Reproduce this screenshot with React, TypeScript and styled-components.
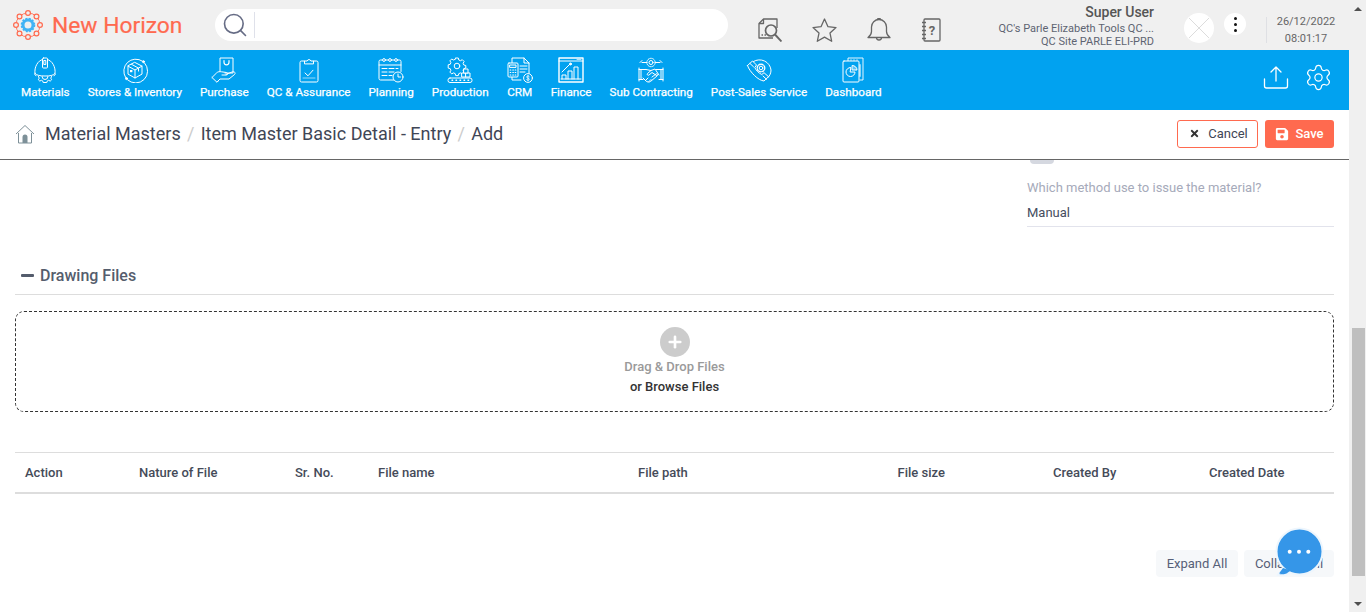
import React from "react";
import styled, { createGlobalStyle } from "styled-components";
import { Search as SearchIcon, Settings, Plus } from "lucide-react";
import { FaTimes, FaSave } from "react-icons/fa";

const Global = createGlobalStyle`
  html, body { margin: 0; padding: 0; height: 100%; overflow: hidden; background: #fff; }
  body { font-family: Roboto, "Liberation Sans", sans-serif; }
  * { box-sizing: border-box; }
`;

const Shell = styled.div`display: flex; height: 612px; width: 1366px; overflow: hidden;`;
const Main = styled.div`position: relative; width: 1349px; display: flex; flex-direction: column; background: #fff;`;

const Rail = styled.div`width: 17px; background: #f0f0f0; display: flex; flex-direction: column;`;
const RailArrow = styled.div<{ $down?: boolean }>`
  height: 17px; display: flex; align-items: center; justify-content: center;
  &::before {
    content: ""; width: 0; height: 0; border-left: 4px solid transparent; border-right: 4px solid transparent;
    ${(p) => (p.$down ? "border-top: 4px solid #505050;" : "border-bottom: 4px solid #505050;")}
  }
`;
const RailTrack = styled.div`flex: 1; padding: 311px 1px 0 3px;`;
const RailThumb = styled.div`height: 248px; background: #bfbfbf;`;

const Header = styled.header`height: 50px; background: #f0f0f0; display: flex; align-items: center; padding-left: 13px; flex: none;`;
const LogoMark = styled.svg`width: 30px; height: 30px; flex: none;`;
const Brand = styled.div`margin-left: 9px; padding-top: 1px; width: 130px; font-size: 22.8px; line-height: 28px; color: #ff6a4f; white-space: nowrap; -webkit-text-stroke: 0.2px #ff6a4f;`;
const SearchBox = styled.div`margin-left: 33px; width: 513px; height: 32px; background: #fff; border-radius: 16px; display: flex; align-items: center; padding-left: 6px; flex: none; color: #666c85;`;
const SearchRule = styled.span`width: 1px; height: 26px; background: #dfe1ea; margin-left: 5px;`;
const ToolIcons = styled.div`margin-left: 30px; padding-top: 10px; display: flex; gap: 30px; flex: none;`;
const ToolSvg = styled.svg`height: 24px; display: block; fill: none; stroke: #666; stroke-width: 1.3; stroke-linejoin: round;`;
const UserBlock = styled.div`width: 213px; text-align: right; flex: none; padding-top: 1px;`;
const UserName = styled.div`font-size: 14px; line-height: 18px; margin-bottom: 1px; font-weight: 500; color: #555; letter-spacing: -0.02px;`;
const UserLine = styled.div`font-size: 11px; line-height: 13px; color: #5e6472; white-space: nowrap;`;
const Avatar = styled.svg`margin: 6px 0 0 30px; width: 30px; height: 30px; flex: none;`;
const Kebab = styled.div`
  margin: 13px 0 0 10px; width: 22px; height: 22px; border-radius: 50%; background: #fff; flex: none; align-self: flex-start;
  display: flex; flex-direction: column; align-items: center; justify-content: center; gap: 3px;
`;
const KebabDot = styled.span`width: 3px; height: 3px; border-radius: 50%; background: #111;`;
const DateBlock = styled.div`
  margin: 10px 0 0 20px; width: 80px; padding-right: 1px; height: 26px; border-left: 1px solid #dfe0e4; display: flex; flex-direction: column; align-items: center; justify-content: center; flex: none; color: #666; font-size: 11px; line-height: 17px;
`;

const Nav = styled.nav`height: 60px; background: #01a2f0; display: flex; padding-left: 21px; gap: 18px; flex: none;`;
const NavItem = styled.a`
  display: flex; flex-direction: column; align-items: center; color: #fff; font-size: 11.7px; line-height: 14px; font-weight: 400; white-space: nowrap; padding-top: 7px; -webkit-text-stroke: 0.25px #fff;
`;
const NavLabel = styled.span`margin-top: 2px;`;
const NavSvg = styled.svg`width: 26px; height: 26px; display: block; fill: none; stroke: #fff; stroke-width: 1; stroke-linecap: round; stroke-linejoin: round;`;
const NavTools = styled.div`margin-left: auto; padding: 0 16px 6px 0; display: flex; align-items: center; gap: 15px;`;

const Crumbs = styled.div`height: 50px; border-bottom: 1px solid #666; display: flex; align-items: center; padding: 0 15px 2px; flex: none; background: #fff;`;
const HomeSvg = styled.svg`width: 20px; height: 20px; flex: none; margin-right: 10px;`;
const Crumb = styled.span`font-size: 18px; color: #3f4656;`;
const CrumbSep = styled.span`font-size: 18px; color: #ccc; margin: 0 6.3px;`;
const CrumbActions = styled.div`margin-left: auto; display: flex; gap: 7px;`;
const CancelBtn = styled.button`
  width: 81px; height: 28px; border: 1px solid #ff6a4f; border-radius: 3px; background: #fff; color: #3f4656; font: 400 13px Roboto, sans-serif;
  display: flex; align-items: center; justify-content: center; gap: 8px; padding: 0 0 0 2px;
`;
const SaveBtn = styled.button`
  width: 69px; height: 28px; border: 0; border-radius: 3px; background: #ff6a4f; color: #fff; font: 500 13px Roboto, sans-serif;
  display: flex; align-items: center; justify-content: center; gap: 6px; padding: 0;
`;

const Content = styled.main`flex: 1; padding: 0 15px; display: flex; flex-direction: column;`;
const MethodField = styled.section`margin-left: auto; width: 307px; height: 67px; border-bottom: 1px solid #e2e3ec;`;
const SwitchStub = styled.div`margin-left: 3px; width: 24px; height: 4px; background: #d5d8e0; border-radius: 0 0 10px 10px;`;
const FieldLabel = styled.div`margin-top: 16px; font-size: 13px; line-height: 16px; color: #a6aaba; white-space: nowrap;`;
const FieldValue = styled.div`margin-top: 9px; font-size: 13px; line-height: 16px; color: #454d5e;`;

const SectionHead = styled.div`margin-top: 34px; height: 34px; border-bottom: 1px solid #ddd; display: flex; align-items: center; padding: 0 0 4px 6px; gap: 6px;`;
const Minus = styled.span`width: 13px; height: 3px; background: #545c6c; border-radius: 1px;`;
const SectionTitle = styled.h2`margin: 0; font-size: 16px; font-weight: 500; color: #555d6d; line-height: 20px;`;

const Dropzone = styled.div`
  margin-top: 16px; height: 101px; border: 1px dashed #333; border-radius: 9px; display: flex; flex-direction: column; align-items: center; padding-top: 15px;
`;
const PlusDisc = styled.div`width: 30px; height: 30px; border-radius: 50%; background: #ccc; display: flex; align-items: center; justify-content: center; color: #fff; flex: none;`;
const DropTitle = styled.div`font-size: 13px; font-weight: 500; line-height: 20px; color: #9a9a9a;`;
const DropBrowse = styled.div`font-size: 13px; font-weight: 500; line-height: 20px; color: #333;`;

const TableHead = styled.div`
  margin-top: 40px; height: 42px; border-top: 1px solid #ddd; border-bottom: 2px solid #ddd;
  display: grid; grid-template-columns: 114px 156px 83px 260px 259.5px 155.5px 156px 1fr; align-items: center; padding-left: 10px;
`;
const HeadCell = styled.div`font-size: 13px; font-weight: 500; color: #454b59; white-space: nowrap;`;

const BottomActions = styled.div`margin-top: 56px; display: flex; justify-content: flex-end; gap: 6px;`;
const GhostBtn = styled.button<{ $w: number }>`
  width: ${(p) => p.$w}px; height: 27px; border: 0; border-radius: 4px; background: #f6f8fa; color: #566078; font: 400 13px Roboto, sans-serif; padding: 0;
`;
const ChatBubble = styled.svg`position: absolute; left: 1274px; top: 526px; width: 52px; height: 52px;`;

const Logo = () => {
  const dots = Array.from({ length: 8 }, (_, i) => {
    const a = (i * Math.PI) / 4;
    return [15 + 12 * Math.cos(a), 15 + 12 * Math.sin(a)];
  });
  return (
    <LogoMark viewBox="0 0 30 30">
      <circle cx="15" cy="15" r="12" fill="none" stroke="#ff7a60" strokeWidth="1" />
      {dots.map(([x, y], i) => (
        <circle key={i} cx={x} cy={y} r="2.4" fill="#f0f0f0" stroke="#ff6a4f" strokeWidth="1.2" />
      ))}
      <circle cx="15" cy="15" r="5" fill="none" stroke="#41b3f5" strokeWidth="3" />
      <circle cx="15" cy="15" r="6.5" fill="none" stroke="#41b3f5" strokeWidth="1.6" strokeDasharray="2 1.4" />
    </LogoMark>
  );
};

const icons: Record<string, React.ReactNode> = {
  materials: (
    <>
      <path d="M3 16.5C2 10 6 3.5 10.5 2.5M15.5 2.5C20 3.5 24 10 23 16.5" />
      <rect x="10.5" y="1" width="5" height="10" rx="1" />
      <rect x="12.2" y="3.5" width="1.6" height="4" />
      <path d="M3 16.5C5 18.5 8 19 13 19s8-.5 10-2.5c.8 1-.2 2.3-1 2.3" />
      <path d="M3 16.5c-.8 1 .2 2.3 1 2.3" />
      <path d="M6.5 19.5l.7 1.7-.9 1.5 1.5 1.4 1.6-.8 1.3.6.5 1.6h3.6l.5-1.6 1.3-.6 1.6.8 1.5-1.4-.9-1.5.7-1.7" />
      <path d="M10 19.5a3 3 0 0 0 6 0" />
    </>
  ),
  stores: (
    <>
      <path d="M20.5 4.2A12 12 0 0 0 3.6 20.5M5.5 22.8A12 12 0 0 0 22.6 6" />
      <circle cx="21.5" cy="4.7" r="1" fill="#fff" />
      <circle cx="4.5" cy="21.6" r="1" fill="#fff" />
      <path d="M13 5.5l7 3.6v8L13 21l-7-3.9v-8z" />
      <path d="M6 9.1l7 3.9 7-3.9M13 13v8M9.5 7.3l7 3.8v3" />
      <rect x="8" y="13" width="2.4" height="2.2" fill="#fff" stroke="none" />
    </>
  ),
  purchase: (
    <>
      <path d="M9 14V1h13v15h-8" />
      <path d="M13 3.5v1.8a2.5 2.5 0 0 0 5 0V3.5" strokeWidth="1.2" />
      <path d="M1 20.5l4.5-4.5c1.5-1.5 3-1.5 5-1.2l5 .7c1.5.3 1.5 2.5-.2 2.5H11" />
      <path d="M15 17.5l6-2.5c2.5-1 4 1 2.5 2.5L18 22H9l-2.5 2.5" />
      <path d="M1 20.5l5 4.8 1-1" />
    </>
  ),
  qc: (
    <>
      <path d="M8.5 4H5.5A1.5 1.5 0 0 0 4 5.5v18A1.5 1.5 0 0 0 5.5 25h15a1.5 1.5 0 0 0 1.5-1.5v-18A1.5 1.5 0 0 0 20.5 4h-3" />
      <path d="M8.5 6.5V4h2.6a2 2 0 0 1 3.8 0h2.6v2.5z" />
      <path d="M9 16l3 2.8 5-5.6" />
      <path d="M7 21h12" opacity=".6" />
    </>
  ),
  planning: (
    <>
      <path d="M16 23H2.5A1.5 1.5 0 0 1 1 21.5v-17A1.5 1.5 0 0 1 2.5 3h19A1.5 1.5 0 0 1 23 4.5v10" />
      <path d="M1 8h22" />
      <circle cx="6" cy="3" r="1.4" fill="#01a2f0" />
      <circle cx="12" cy="3" r="1.4" fill="#01a2f0" />
      <circle cx="18" cy="3" r="1.4" fill="#01a2f0" />
      <path d="M4 11.5h5M11 11.5h5M18 11.5h2M4 15h5M11 15h5M4 18.5h5M11 18.5h3" />
      <circle cx="20" cy="20" r="5" fill="#01a2f0" />
      <path d="M20 17v3h2.5" />
    </>
  ),
  production: (
    <>
      <circle cx="10" cy="9" r="2.8" />
      <path d="M8.7 1h2.6l.5 2 1.7.7 1.8-1 1.8 1.8-1 1.8.7 1.7 2 .5v2.600l-2 .5-.7 1.700 1 1.800-1.800 1.800-1.800-1-1.700.7-.5 2H8.700l-.5-2-1.700-.7-1.800 1-1.800-1.800 1-1.800-.7-1.700-2-.5V7.800l2-.5.7-1.700-1-1.800 1.800-1.800 1.800 1 1.700-.7z" />
      <rect x="1" y="21" width="24" height="4.500" rx="2" />
      <path d="M5 23.200h.6M9 23.200h.6M13 23.200h.6M17 23.200h.6M21 23.200h.6" strokeWidth="1.400" />
      <rect x="15" y="16" width="4" height="4" fill="#01a2f0" />
      <rect x="19" y="16" width="4" height="4" fill="#01a2f0" />
      <rect x="17" y="12" width="4" height="4" fill="#01a2f0" />
    </>
  ),
  crm: (
    <>
      <path d="M5 6V1h12l5 5v11M17 1v5h5M14 23H5v-3" />
      <rect x="1" y="6" width="10" height="14" rx="1" fill="#01a2f0" />
      <rect x="3" y="8" width="6" height="2.400" />
      <path d="M3.200 13h.6M5.800 13h.6M8.200 13h.6M3.200 15.500h.6M5.800 15.500h.6M8.200 15.500h.6M3.200 18h.6M5.800 18h.6M8.200 18h.6" strokeWidth="1.200" />
      <path d="M13 9h7M13 12h7M13 15h5" />
      <circle cx="21" cy="21" r="4.400" fill="#01a2f0" />
      <path d="M22.300 19.500c-.5-.8-2.700-.8-2.700.5s2.800 1 2.800 2.200-2.300 1.300-2.900.3M21 18.300v5.400" strokeWidth=".8" />
    </>
  ),
  finance: (
    <>
      <rect x="1" y="1" width="24" height="24" strokeWidth="1.400" />
      <path d="M1 4h24" />
      <path d="M19 2.500h4" opacity=".7" />
      <path d="M4 22v-4h4v4M10 22v-8h4v8M16 22V10h4v12M3 22h20" />
      <path d="M4 15l8-8" />
      <circle cx="12.500" cy="7" r="1" fill="#fff" />
    </>
  ),
  sub: (
    <>
      <circle cx="13" cy="5.500" r="2" />
      <circle cx="13" cy="5.500" r="4.200" strokeDasharray="1.800 1.200" />
      <path d="M9 5.500H4M17 5.500h5M4 3.500L2 5.500M22 3.500l2 2" />
      <path d="M1 11v13M3 12.500v10M1 12.500h7M1 22.500h4M25 11v13M23 12.500v10M25 12.500h-7M25 22.500h-4" />
      <path d="M5 21l3 3c1 1 3 1.500 4.500.5l7-6c1-1-.5-2.500-1.500-1.500L14 20" />
      <path d="M8 12.500l5 1 4-1.500 4 6M13 13.500l-3.500 3c-1 1 .5 2.500 1.500 1.500l3-2.500 4.500 3" />
      <path d="M8 23l2-2M11 24.500l2-2" />
    </>
  ),
  post: (
    <>
      <path d="M7.500 4.500A11.500 11.500 0 0 1 25 13c0 3-1 5.500-3 7.500" />
      <path d="M1.500 8.500l5-4.500 4 4-1.700 2.500c1.200 3 4 5.700 7 7l2.200-1.800 4.500 4-4.500 4.300c-3-.3-6.500-2.500-9.500-5.500S2.500 12 1.500 8.500z" />
      <path d="M4 6.500l3.500 3.300M17 19l3.500 3.300" />
      <circle cx="15" cy="11" r="1.800" />
      <circle cx="15" cy="11" r="3.800" strokeDasharray="1.800 1.200" strokeWidth="1.300" />
    </>
  ),
  dashboard: (
    <>
      <path d="M8 4V1h15v22h-3" opacity=".9" />
      <path d="M11 4V2.500M14 4V2.500M17 4V2.500" opacity=".6" />
      <path d="M20 8v11" strokeWidth="2" opacity=".55" />
      <rect x="3" y="4" width="16" height="21" rx="1" fill="#01a2f0" />
      <path d="M10.500 10.500a4.500 4.500 0 1 0 4.500 4.500h-4.500z" />
      <path d="M12.500 8.500a4.500 4.500 0 0 1 4.500 4.500h-4.500z" fill="#fff" fillOpacity=".35" />
    </>
  ),
};

const navItems = [
  ["materials", "Materials"],
  ["stores", "Stores & Inventory"],
  ["purchase", "Purchase"],
  ["qc", "QC & Assurance"],
  ["planning", "Planning"],
  ["production", "Production"],
  ["crm", "CRM"],
  ["finance", "Finance"],
  ["sub", "Sub Contracting"],
  ["post", "Post-Sales Service"],
  ["dashboard", "Dashboard"],
];

const columns = ["Action", "Nature of File", "Sr. No.", "File name", "File path", "File size", "Created By", "Created Date"];

export default function App() {
  return (
    <>
      <Global />
      <Shell>
        <Main>
          <Header>
            <Logo />
            <Brand>New Horizon</Brand>
            <SearchBox>
              <SearchIcon size={28} strokeWidth={1.4} />
              <SearchRule />
            </SearchBox>
            <ToolIcons>
              <ToolSvg viewBox="0 0 24 24" width="24">
                <path d="M15 20H1V5.500L5.500 1H19v9" />
                <path d="M5.500 1v4.500H1" />
                <circle cx="13" cy="12.500" r="5.500" strokeWidth="1.700" />
                <path d="M17 16.500L23.500 23.500" strokeWidth="1.900" />
                <path d="M3.500 17h1.500M6.500 17H8" strokeWidth="1.400" />
              </ToolSvg>
              <ToolSvg viewBox="0 0 25 24" width="25">
                <path d="M12.500 1l3.500 7.700 8 .9-6 5.500 1.700 8.200-7.200-4.200-7.200 4.200L7 15.100 1 9.600l8-.9z" />
              </ToolSvg>
              <ToolSvg viewBox="0 0 24 24" width="24">
                <path d="M1 19.500c2-1.500 3.500-3 3.500-6V9a7.500 7.500 0 0 1 15 0v4.500c0 3 1.500 4.500 3.500 6z" />
                <path d="M9.500 19.500a2.500 2.500 0 0 0 5 0" />
                <path d="M10.500 1.800a1.500 1.500 0 0 1 3 0" />
              </ToolSvg>
              <ToolSvg viewBox="0 0 20 24" width="20">
                <rect x="3" y="1" width="16" height="22" rx="1" />
                <path d="M1 4.500h4M1 8.500h4M1 12.500h4M1 16.500h4M1 20.500h4" />
                <text x="11" y="17" fontSize="13" fontWeight="700" fontFamily="Roboto" textAnchor="middle" fill="#666" stroke="none">?</text>
              </ToolSvg>
            </ToolIcons>
            <UserBlock>
              <UserName>Super User</UserName>
              <UserLine>QC's Parle Elizabeth Tools QC ...</UserLine>
              <UserLine>QC Site PARLE ELI-PRD</UserLine>
            </UserBlock>
            <Avatar viewBox="0 0 30 30">
              <circle cx="15" cy="15" r="15" fill="#fff" />
              <path d="M5 5l20 20M25 5L5 25" stroke="#dcdcdc" strokeWidth="1" />
            </Avatar>
            <Kebab>
              <KebabDot />
              <KebabDot />
              <KebabDot />
            </Kebab>
            <DateBlock>
              <span>26/12/2022</span>
              <span>08:01:17</span>
            </DateBlock>
          </Header>
          <Nav>
            {navItems.map(([key, label]) => (
              <NavItem key={key}>
                <NavSvg viewBox="0 0 26 26">{icons[key]}</NavSvg>
                <NavLabel>{label}</NavLabel>
              </NavItem>
            ))}
            <NavTools>
              <NavSvg viewBox="0 0 26 26">
                <path d="M13 17V3M8 8l5-5 5 5" strokeWidth="1.300" />
                <path d="M1.500 15v7a2 2 0 0 0 2 2h19a2 2 0 0 0 2-2v-7" strokeWidth="1.300" />
              </NavSvg>
              <Settings size={29} strokeWidth={1} color="#fff" />
            </NavTools>
          </Nav>
          <Crumbs>
            <HomeSvg viewBox="0 0 20 20">
              <path d="M1 10L10 1.500 19 10" fill="none" stroke="#7d9098" strokeWidth="1" />
              <path d="M3.500 9v10h13V9" fill="none" stroke="#7d9098" strokeWidth="1" />
              <path d="M7.500 19v-6a2.500 2.500 0 0 1 5 0v6z" fill="#7d9098" />
            </HomeSvg>
            <Crumb>Material Masters</Crumb>
            <CrumbSep>/</CrumbSep>
            <Crumb>Item Master Basic Detail - Entry</Crumb>
            <CrumbSep>/</CrumbSep>
            <Crumb>Add</Crumb>
            <CrumbActions>
              <CancelBtn>
                <FaTimes size={11} color="#333" />
                Cancel
              </CancelBtn>
              <SaveBtn>
                <FaSave size={14} />
                Save
              </SaveBtn>
            </CrumbActions>
          </Crumbs>
          <Content>
            <MethodField>
              <SwitchStub />
              <FieldLabel>Which method use to issue the material?</FieldLabel>
              <FieldValue>Manual</FieldValue>
            </MethodField>
            <SectionHead>
              <Minus />
              <SectionTitle>Drawing Files</SectionTitle>
            </SectionHead>
            <Dropzone>
              <PlusDisc>
                <Plus size={18} strokeWidth={3.5} />
              </PlusDisc>
              <DropTitle>Drag &amp; Drop Files</DropTitle>
              <DropBrowse>or Browse Files</DropBrowse>
            </Dropzone>
            <TableHead>
              {columns.map((c) => (
                <HeadCell key={c}>{c}</HeadCell>
              ))}
            </TableHead>
            <BottomActions>
              <GhostBtn $w={82}>Expand All</GhostBtn>
              <GhostBtn $w={90}>Collapse All</GhostBtn>
            </BottomActions>
          </Content>
          <ChatBubble viewBox="0 0 52 52">
            <path d="M10 42L3.500 49c5 .8 10 0 14-3z" fill="#3596e8" stroke="#eef6fd" strokeWidth="2" strokeLinejoin="round" />
            <circle cx="25.500" cy="25.500" r="23" fill="#3596e8" stroke="#eef6fd" strokeWidth="2" />
            <path d="M9 42l-4 5.500c5 .5 9-.5 12-3z" fill="#3596e8" />
            <circle cx="15.700" cy="25.700" r="2" fill="#fff" />
            <circle cx="25" cy="25.700" r="2" fill="#fff" />
            <circle cx="34.300" cy="25.700" r="2" fill="#fff" />
          </ChatBubble>
        </Main>
        <Rail>
          <RailArrow />
          <RailTrack>
            <RailThumb />
          </RailTrack>
          <RailArrow $down />
        </Rail>
      </Shell>
    </>
  );
}
